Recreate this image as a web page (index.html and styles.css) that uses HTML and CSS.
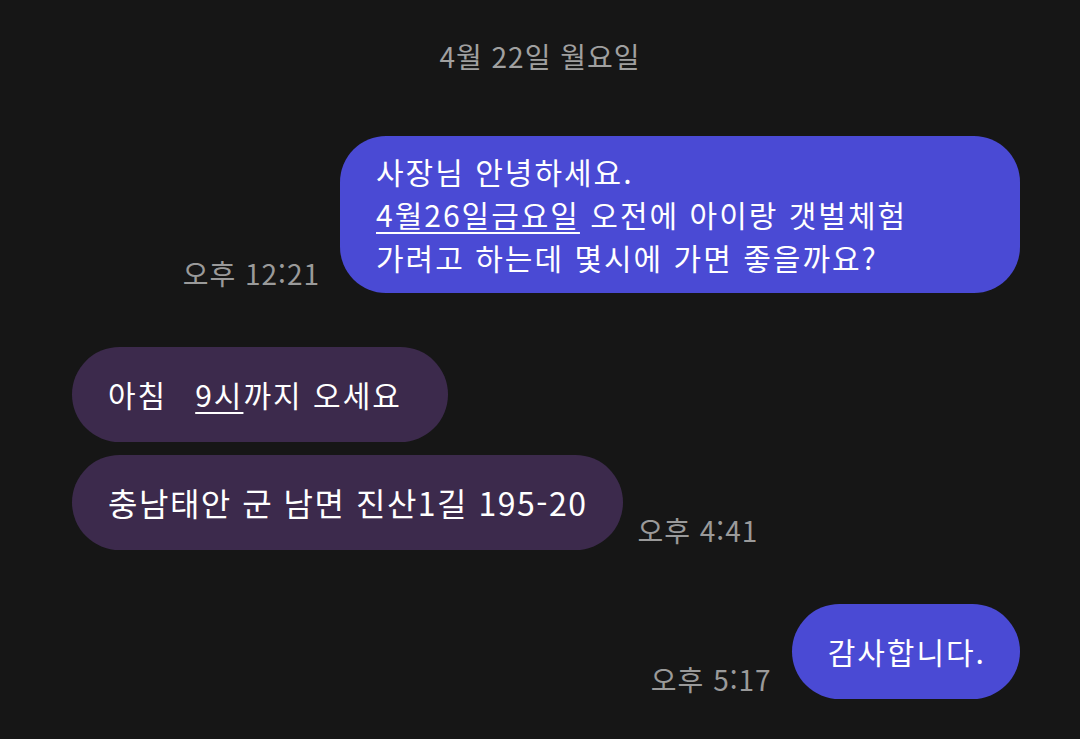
FILE: index.html
```html
<!DOCTYPE html>
<html lang="ko">
<head>
  <meta charset="UTF-8">
  <meta name="viewport" content="width=device-width, initial-scale=1.0">
  <title>메시지</title>
  <link rel="stylesheet" href="styles.css">
</head>
<body>

  <div class="chat">
    <div class="date">4월 22일 월요일</div>

    <div class="row sent first">
      <span class="time">오후 12:21</span>
      <div class="bubble out wide">
        사장님 안녕하세요.<br>
        <span class="link">4월26일금요일</span> 오전에 아이랑 갯벌체험<br>
        가려고 하는데 몇시에 가면 좋을까요?
      </div>
    </div>

    <div class="row received group">
      <div class="bubble in">아침<span class="gap"></span><span class="link">9시</span>까지 오세요</div>
    </div>

    <div class="row received tight">
      <div class="bubble in big">충남태안 군 남면 진산1길 195-20</div>
      <span class="time near">오후 4:41</span>
    </div>

    <div class="row sent group">
      <span class="time">오후 5:17</span>
      <div class="bubble out">감사합니다.</div>
    </div>
  </div>

</body>
</html>
```

FILE: styles.css
```css
body {
  margin: 0;
  padding: 0;
  background-color: #161616;
  font-family: "Noto Sans CJK KR", "Noto Sans", sans-serif;
  color: #fff;
}
.chat {
  width: 1080px;
  height: 739px;
  overflow: hidden;
  padding: 36px 60px 0 72px;
  box-sizing: border-box;
}
.date {
  text-align: center;
  font-size: 28px;
  line-height: 40px;
  letter-spacing: 1px;
  color: #a0a0a0;
  margin-left: -12px;
}
.row {
  display: flex;
  align-items: flex-end;
  gap: 20px;
}
.row.first {
  margin-top: 60px;
}
.row.group {
  margin-top: 54px;
}
.row.tight {
  margin-top: 13px;
}
.sent {
  justify-content: flex-end;
}
.received {
  justify-content: flex-start;
}
.time {
  font-size: 28px;
  line-height: 40px;
  letter-spacing: 1px;
  color: #9a9a9a;
  white-space: nowrap;
}
.time.near {
  margin-left: -6px;
}
.bubble {
  min-height: 95px;
  box-sizing: border-box;
  padding: 14px 34px 14px 36px;
  border-radius: 48px;
  font-size: 30px;
  line-height: 43px;
  letter-spacing: 2px;
  display: flex;
  flex-direction: column;
  justify-content: center;
}
.bubble.out {
  background-color: #4a4ad4;
}
.bubble.in {
  display: block;
  padding: 26px 46px 26px 36px;
  background-color: #3c2a4c;
}
.bubble.wide {
  display: block;
  width: 680px;
  border-radius: 46px;
}
.bubble.big {
  font-size: 32px;
  letter-spacing: 1.5px;
  padding-right: 36px;
}
.link {
  text-decoration: underline;
  text-decoration-thickness: 2px;
  text-underline-offset: 5px;
}
.gap {
  display: inline-block;
  width: 28px;
}
```
